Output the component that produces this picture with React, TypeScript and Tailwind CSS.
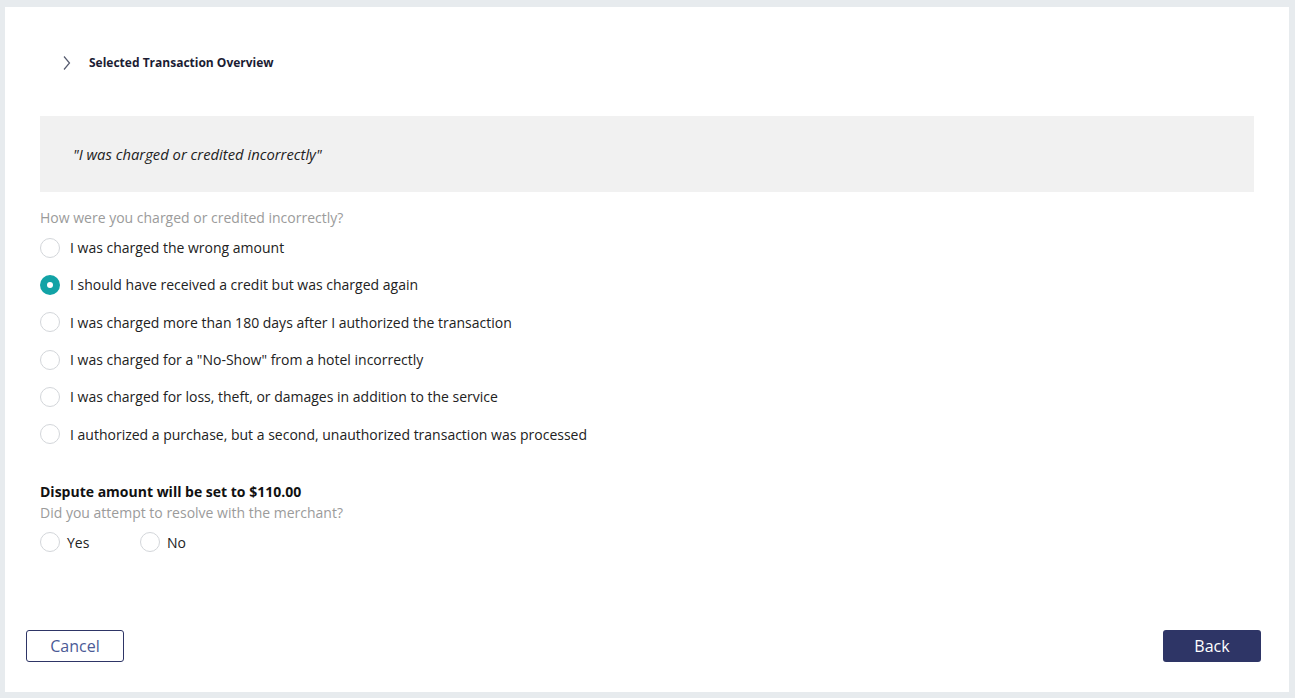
import { useState } from 'react'

const REASONS = [
  'I was charged the wrong amount',
  'I should have received a credit but was charged again',
  'I was charged more than 180 days after I authorized the transaction',
  'I was charged for a "No-Show" from a hotel incorrectly',
  'I was charged for loss, theft, or damages in addition to the service',
  'I authorized a purchase, but a second, unauthorized transaction was processed',
]

function Radio({ checked }: { checked: boolean }) {
  if (checked) {
    return (
      <span className="flex h-[20px] w-[20px] shrink-0 items-center justify-center rounded-full bg-[#12a3a6]">
        <span className="h-[6px] w-[6px] rounded-full bg-white" />
      </span>
    )
  }
  return <span className="h-[20px] w-[20px] shrink-0 rounded-full border border-[#d3d6da] bg-white" />
}

function App() {
  const [reason, setReason] = useState(1)
  const [resolved, setResolved] = useState<string | null>(null)

  return (
    <div className="min-h-[698px] bg-[#e7ebee] pt-[7px] pb-[6px] pl-[5px] pr-[6px] font-['Open_Sans',sans-serif]">
      <div className="flex h-[685px] flex-col bg-white">
        {/* HEADER */}
        <div className="flex h-[70px] items-center pl-[56px] pt-[42px]">
          <svg width="12" height="16" viewBox="0 0 12 16" className="text-[#555a6e]">
            <path d="M3 1.5 L8.5 8 L3 14.5" fill="none" stroke="currentColor" strokeWidth="1.2" />
          </svg>
          <span className="ml-[16px] text-[12px] font-bold text-[#1b1c33]">Selected Transaction Overview</span>
        </div>

        <div className="px-[35px] pt-[39px]">
          {/* QUOTE */}
          <div className="flex h-[76px] items-center bg-[#f1f1f1] pl-[33px]">
            <span className="text-[14.8px] italic text-[#222]">"I was charged or credited incorrectly"</span>
          </div>

          {/* REASONS */}
          <div className="mt-[15px] text-[14px] text-[#9b9b9b]">How were you charged or credited incorrectly?</div>
          <div className="mt-[1px] flex flex-col">
            {REASONS.map((r, i) => (
              <label
                key={r}
                onClick={() => setReason(i)}
                className="flex h-[37.3px] cursor-pointer items-center gap-[10px] text-[14px] text-[#222]"
              >
                <Radio checked={reason === i} />
                <span>{r}</span>
              </label>
            ))}
          </div>

          {/* DISPUTE */}
          <div className="mt-[28px] text-[14px] font-bold text-[#111]">Dispute amount will be set to $110.00</div>
          <div className="text-[14px] text-[#9b9b9b]">Did you attempt to resolve with the merchant?</div>
          <div className="mt-[9px] flex items-center text-[14px] text-[#222]">
            <label onClick={() => setResolved('yes')} className="flex w-[100px] cursor-pointer items-center gap-[7px]">
              <Radio checked={resolved === 'yes'} />
              <span>Yes</span>
            </label>
            <label onClick={() => setResolved('no')} className="flex cursor-pointer items-center gap-[7px]">
              <Radio checked={resolved === 'no'} />
              <span>No</span>
            </label>
          </div>
        </div>

        {/* FOOTER */}
        <div className="mt-auto flex items-center justify-between pl-[21px] pr-[28px] pb-[30px]">
          <button className="h-[32px] w-[98px] rounded-[3px] border border-[#2e3566] bg-white text-[16px] text-[#4b5a96]">
            Cancel
          </button>
          <button className="h-[32px] w-[98px] rounded-[3px] bg-[#2e3566] text-[16px] text-white">Back</button>
        </div>
      </div>
    </div>
  )
}

export default App
